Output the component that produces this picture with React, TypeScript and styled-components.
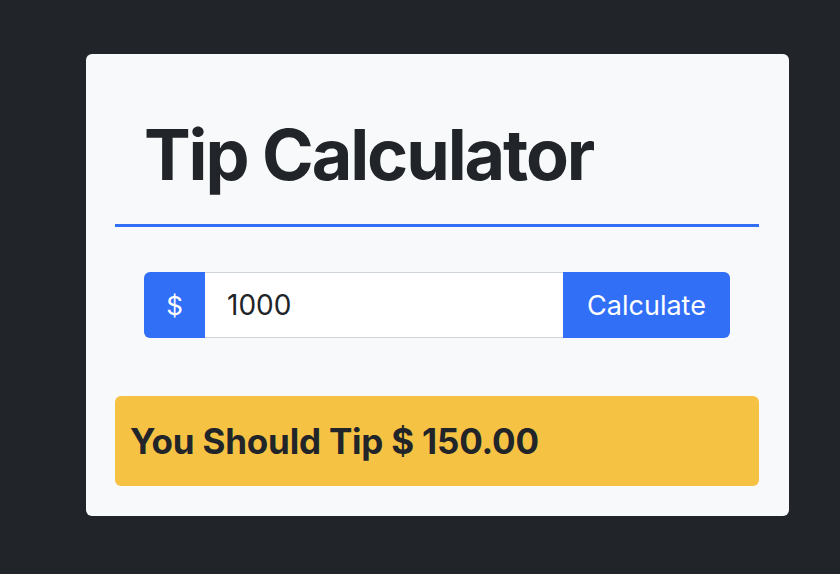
import React from "react";
import styled, { createGlobalStyle } from "styled-components";

const Global = createGlobalStyle`
  html, body { margin: 0; padding: 0; background: #212529; }
  body { font-family: Inter, "Noto Sans", sans-serif; color: #212529; }
`;

const Page = styled.div`
  padding: 54px 0 0 86px;
`;

const Card = styled.div`
  box-sizing: border-box;
  width: 703px;
  height: 462px;
  background: #f8f9fa;
  border-radius: 6px;
  padding: 0 30px 0 29px;
`;

const Header = styled.div`
  border-bottom: 3px solid #316ff6;
  padding: 59px 0 0 29px;
  height: 173px;
  box-sizing: border-box;
`;

const Title = styled.h1`
  margin: 0;
  font-size: 70px;
  font-weight: 700;
  line-height: 1.2;
  letter-spacing: -2.1px;
`;

const Group = styled.div`
  display: flex;
  margin: 45px 29px 0 29px;
  height: 66px;
`;

const Addon = styled.div`
  width: 61px;
  background: #316ff6;
  color: #fff;
  display: flex;
  align-items: center;
  justify-content: center;
  font-size: 26px;
  border-radius: 6px 0 0 6px;
`;

const Input = styled.input`
  flex: 1;
  min-width: 0;
  box-sizing: border-box;
  border: 1px solid #ced4da;
  border-left: none;
  border-right: none;
  background: #fff;
  font-family: inherit;
  font-size: 28px;
  color: #212529;
  padding: 0 22px;
  outline: none;
`;

const Button = styled.button`
  width: 167px;
  border: none;
  background: #316ff6;
  color: #fff;
  font-family: inherit;
  font-size: 27px;
  border-radius: 0 6px 6px 0;
  padding: 0;
`;

const Alert = styled.div`
  margin-top: 58px;
  height: 90px;
  box-sizing: border-box;
  background: #f6c244;
  border-radius: 6px;
  padding: 0 15px;
  display: flex;
  align-items: center;
  font-size: 35px;
  font-weight: 700;
  letter-spacing: -0.2px;
  color: #212529;
`;

export default function App() {
  return (
    <>
      <Global />
      <Page>
        <Card>
          <Header>
            <Title>Tip Calculator</Title>
          </Header>
          <Group>
            <Addon>$</Addon>
            <Input defaultValue="1000" />
            <Button>Calculate</Button>
          </Group>
          <Alert>You Should Tip $ 150.00</Alert>
        </Card>
      </Page>
    </>
  );
}
